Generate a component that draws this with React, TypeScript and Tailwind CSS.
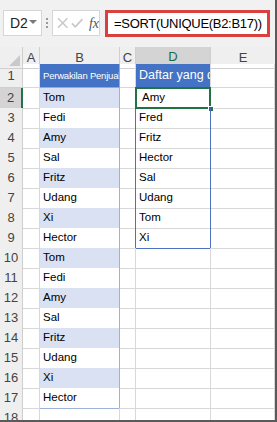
import React from 'react';

const colB = ['Tom', 'Fedi', 'Amy', 'Sal', 'Fritz', 'Udang', 'Xi', 'Hector', 'Tom', 'Fedi', 'Amy', 'Sal', 'Fritz', 'Udang', 'Xi', 'Hector'];
const colD = ['Amy', 'Fred', 'Fritz', 'Hector', 'Sal', 'Udang', 'Tom', 'Xi'];

const gridCols = 'grid grid-cols-[23px_17px_80px_16px_75px_1fr]';
const cell = 'border-r border-b border-[#d8d8d8]';

const FormulaBar = () => (
  <div className="flex h-[47px] items-start bg-[#f1f1f1] pt-[10px] pl-[3px]">
    <div className="flex h-[26px] w-[39px] items-center justify-between border border-[#d6d6d6] bg-white pl-[6px] pr-[4px] text-[14px] text-[#222]">
      <span>D2</span>
      <span className="mb-[2px] border-x-[4px] border-t-[4px] border-x-transparent border-t-[#7a7a7a]" />
    </div>
    <div className="flex h-[26px] w-[10px] flex-col items-center justify-center gap-[2px]">
      <span className="h-[2px] w-[2px] bg-[#9a9a9a]" />
      <span className="h-[2px] w-[2px] bg-[#9a9a9a]" />
      <span className="h-[2px] w-[2px] bg-[#9a9a9a]" />
    </div>
    <div className="flex h-[26px] w-[48px] items-center gap-[3px] border border-[#d6d6d6] bg-white pl-[4px]">
      <svg width="12" height="12" viewBox="0 0 12 12" fill="none" stroke="#c8c8c8" strokeWidth="1.6">
        <path d="M1 1 L11 11 M11 1 L1 11" />
      </svg>
      <svg width="13" height="12" viewBox="0 0 13 12" fill="none" stroke="#c8c8c8" strokeWidth="1.8">
        <path d="M1 6.5 L4.5 10 L12 2" />
      </svg>
      <span className="ml-[2px] text-[14px] italic text-[#555]" style={{ fontFamily: '"Liberation Serif", serif' }}>fx</span>
    </div>
    <div className="ml-[5px] flex h-[27px] w-[165px] items-center whitespace-nowrap border-[3px] border-[#d9413f] bg-white pl-[6px] text-[13px] tracking-[-0.3px] text-black">
      =SORT(UNIQUE(B2:B17))
    </div>
  </div>
);

const ColumnHeaders = () => (
  <div className={`${gridCols} h-[17px] bg-[#efefef] text-[13px] text-[#444]`}>
    <div className="relative border-r border-b border-[#cfcfcf]">
      <svg className="absolute right-[2px] bottom-[2px]" width="11" height="11" viewBox="0 0 11 11">
        <path d="M11 0 L11 11 L0 11 Z" fill="#c9c9c9" />
      </svg>
    </div>
    <div className="flex items-center justify-center border-r border-b border-[#cfcfcf]">A</div>
    <div className="flex items-center justify-center border-r border-b border-[#cfcfcf]">B</div>
    <div className="flex items-center justify-center border-r border-b border-[#cfcfcf]">C</div>
    <div className="flex items-center justify-center border-r border-b-[2px] border-r-[#cfcfcf] border-b-[#217346] bg-[#d4d4d4] text-[#1e6b40]">D</div>
    <div className="flex items-center justify-center border-b border-[#cfcfcf]">E</div>
  </div>
);

const RowHeader = ({ n, active }: { n: number; active?: boolean }) => (
  <div
    className={`flex items-center justify-center border-b text-[13px] text-[#444] ${
      active ? 'border-r-[2px] border-r-[#217346] border-b-[#cfcfcf] bg-[#d4d4d4]' : 'border-r border-[#cfcfcf] bg-[#efefef]'
    }`}
  >
    {n}
  </div>
);

export default function App() {
  return (
    <div
      className="h-[422px] w-[277px] overflow-hidden border-r-2 border-b-2 border-[#5a5a5a] bg-white"
      style={{ fontFamily: '"Liberation Sans", Arial, sans-serif' }}
    >
      <FormulaBar />
      <ColumnHeaders />

      {/* row 1: table header and spill header */}
      <div className={`${gridCols} h-[24px]`}>
        <RowHeader n={1} />
        <div className={cell} />
        <div className="flex items-center overflow-hidden whitespace-nowrap border-r border-b border-[#8ea9db] bg-[#4472c4] pt-[2px] pl-[3px] text-[9.5px] tracking-[-0.2px] text-white">
          Perwakilan Penjual
        </div>
        <div className={cell} />
        <div className="flex items-center overflow-hidden whitespace-nowrap border-b border-r border-[#d8d8d8] bg-[#4472c4] pl-[3px] text-[12.5px] text-white">
          Daftar yang diurutkan
        </div>
        <div className={cell} />
      </div>

      {colB.map((name, i) => {
        const row = i + 2;
        const d = colD[i];
        const inSpill = i < colD.length;
        const last = i === colD.length - 1;
        return (
          <div key={row} className={`${gridCols} h-[20px]`}>
            <RowHeader n={row} active={row === 2} />
            <div className={cell} />
            <div
              className={`flex items-center border-r border-b border-[#9db1d9] pl-[3px] text-[11.5px] text-black ${
                i % 2 === 0 ? 'bg-[#d9e1f2]' : 'bg-white'
              }`}
            >
              {name}
            </div>
            <div className={`${cell} ${inSpill ? 'border-r-[#4a72c0]' : ''}`} />
            <div
              className={`relative flex items-center pl-[3px] text-[11.5px] text-black ${
                inSpill
                  ? `border-r border-[#4a72c0] ${last ? 'border-b' : 'border-b border-b-[#d8d8d8]'}`
                  : cell
              }`}
            >
              {row === 2 && (
                <>
                  <span className="pointer-events-none absolute -top-px -left-px -right-px -bottom-px border-2 border-[#217346]" />
                  <span className="absolute -right-[4px] -bottom-[4px] h-[6px] w-[6px] border border-white bg-[#217346]" />
                </>
              )}
              <span className={row === 2 ? 'pl-[3px]' : ''}>{d}</span>
            </div>
            <div className={cell} />
          </div>
        );
      })}

      <div className={`${gridCols} h-[20px]`}>
        <RowHeader n={18} />
        <div className={cell} />
        <div className={cell} />
        <div className={cell} />
        <div className={cell} />
        <div className={cell} />
      </div>
    </div>
  );
}
